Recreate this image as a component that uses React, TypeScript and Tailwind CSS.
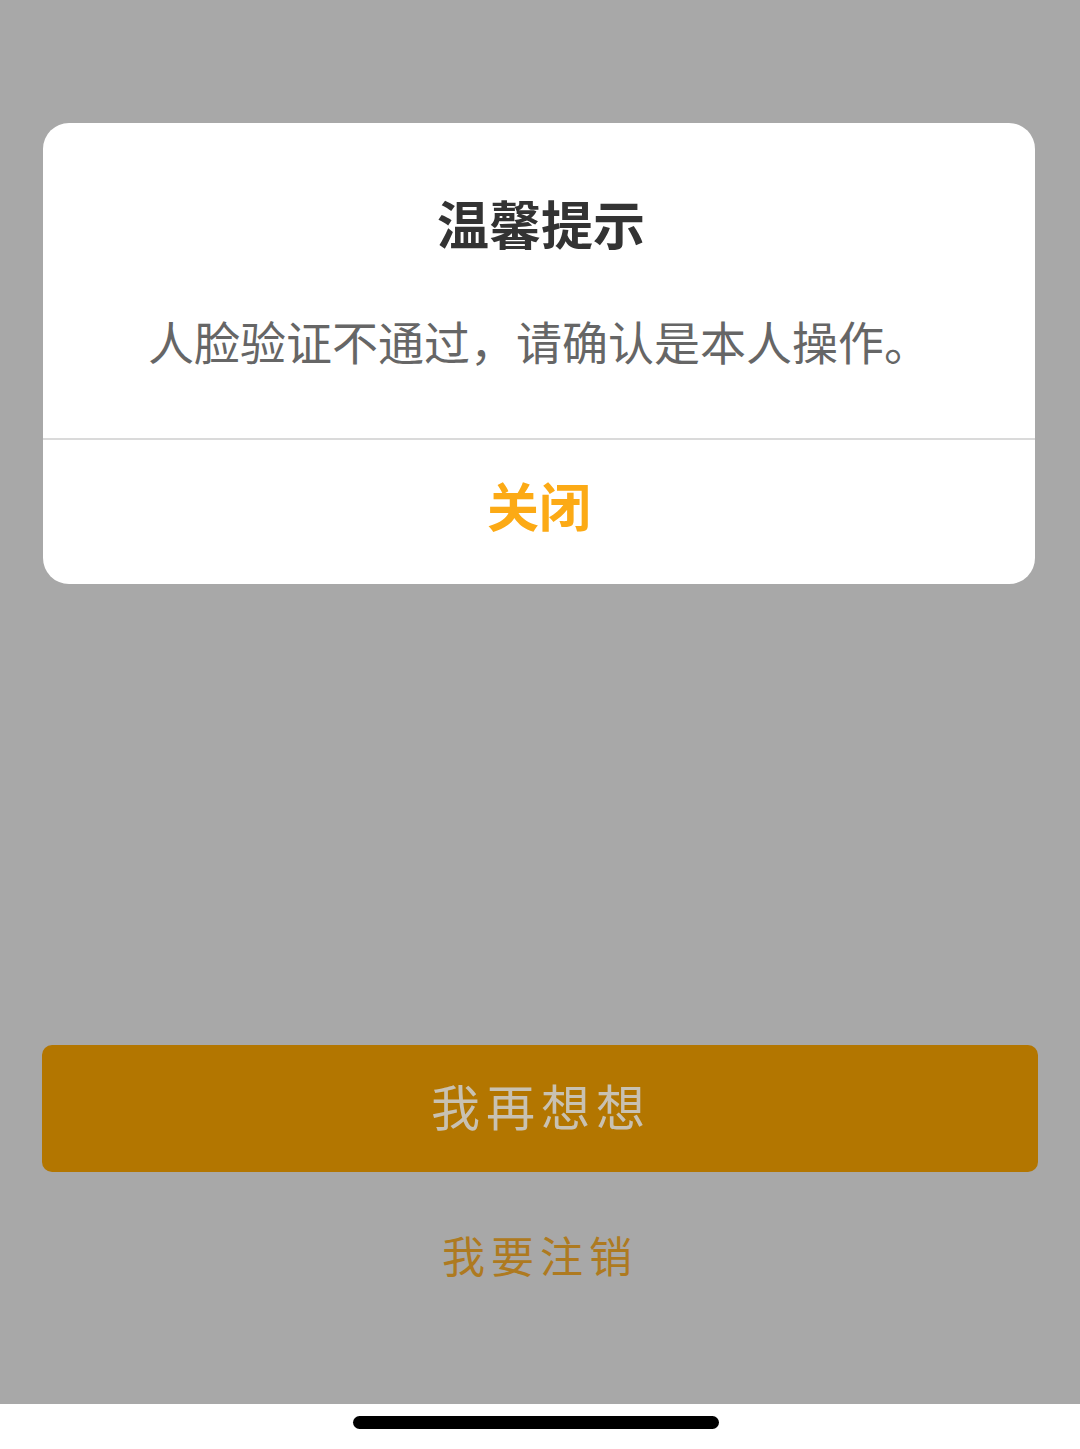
const font = { fontFamily: '"Noto Sans CJK SC", "Noto Sans", sans-serif' };

const AlertDialog = () => {
  return (
    <div className="ml-[43px] mt-[123px] w-[992px] rounded-[26px] bg-white">
      <div className="pt-[74px] pl-[4px] text-center text-[52px] leading-[52px] font-bold text-[#333333]">温馨提示</div>
      <div className="mt-[68px] pb-[75px] text-center text-[46px] leading-[46px] text-[#666666]">
        人脸验证不通过，请确认是本人操作。
      </div>
      <div className="h-[2px] bg-[#dadada]" />
      <div className="h-[144px] pt-[39px] text-center text-[52px] leading-[52px] font-bold text-[#fcaa15]">关闭</div>
    </div>
  );
};

export default function App() {
  return (
    <div className="flex h-[1449px] w-[1080px] flex-col overflow-hidden bg-white" style={font}>
      <div className="flex h-[1404px] flex-col bg-[#a8a8a8]">
        <AlertDialog />
        <button className="ml-[42px] mt-[461px] flex h-[127px] w-[996px] items-center justify-center rounded-[10px] bg-[#b37600] pb-[9px] pl-[2px] text-[49px] leading-none tracking-[6px] text-[#c8c1b2]">
          我再想想
        </button>
        <div className="mt-[61px] text-center text-[43px] leading-[43px] tracking-[6px] text-[#ae7a20]">我要注销</div>
      </div>
      <div className="h-[45px] pt-[12px]">
        <div className="ml-[353px] h-[13px] w-[366px] rounded-full bg-black" />
      </div>
    </div>
  );
}
